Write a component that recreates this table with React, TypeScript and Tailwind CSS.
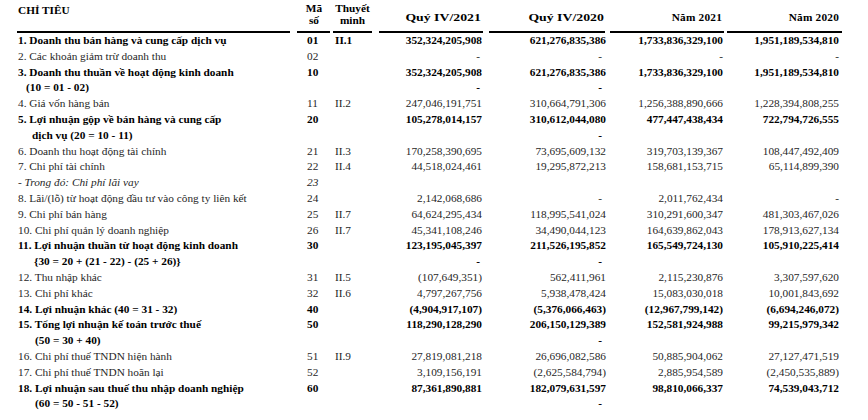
type Row = {
  label: string;
  code?: string;
  note?: string;
  values: string[];
  bold?: boolean;
  italic?: boolean;
  indent?: string;
};

const rows: Row[] = [
  { label: "1. Doanh thu bán hàng và cung cấp dịch vụ", code: "01", note: "II.1", bold: true, values: ["352,324,205,908", "621,276,835,386", "1,733,836,329,100", "1,951,189,534,810"] },
  { label: "2. Các khoản giảm trừ doanh thu", code: "02", values: ["-", "-", "-", "-"] },
  { label: "3. Doanh thu thuần về hoạt động kinh doanh", code: "10", bold: true, values: ["352,324,205,908", "621,276,835,386", "1,733,836,329,100", "1,951,189,534,810"] },
  { label: "(10 = 01 - 02)", bold: true, indent: "pl-[9px]", values: ["-", "-", "", ""] },
  { label: "4. Giá vốn hàng bán", code: "11", note: "II.2", values: ["247,046,191,751", "310,664,791,306", "1,256,388,890,666", "1,228,394,808,255"] },
  { label: "5. Lợi nhuận gộp về bán hàng và cung cấp", code: "20", bold: true, values: ["105,278,014,157", "310,612,044,080", "477,447,438,434", "722,794,726,555"] },
  { label: "dịch vụ (20 = 10 - 11)", bold: true, indent: "pl-[15px]", values: ["", "-", "", ""] },
  { label: "6. Doanh thu hoạt động tài chính", code: "21", note: "II.3", values: ["170,258,390,695", "73,695,609,132", "319,703,139,367", "108,447,492,409"] },
  { label: "7. Chi phí tài chính", code: "22", note: "II.4", values: ["44,518,024,461", "19,295,872,213", "158,681,153,715", "65,114,899,390"] },
  { label: "- Trong đó: Chi phí lãi vay", code: "23", italic: true, values: ["", "", "", ""] },
  { label: "8. Lãi/(lỗ) từ hoạt động đầu tư vào công ty liên kết", code: "24", values: ["2,142,068,686", "-", "2,011,762,434", "-"] },
  { label: "9. Chi phí bán hàng", code: "25", note: "II.7", values: ["64,624,295,434", "118,995,541,024", "310,291,600,347", "481,303,467,026"] },
  { label: "10. Chi phí quản lý doanh nghiệp", code: "26", note: "II.7", values: ["45,341,108,246", "34,490,044,123", "164,639,862,043", "178,913,627,134"] },
  { label: "11. Lợi nhuận thuần từ hoạt động kinh doanh", code: "30", bold: true, values: ["123,195,045,397", "211,526,195,852", "165,549,724,130", "105,910,225,414"] },
  { label: "{30 = 20 + (21 - 22) - (25 + 26)}", bold: true, indent: "pl-[17px]", values: ["-", "-", "", ""] },
  { label: "12. Thu nhập khác", code: "31", note: "II.5", values: ["(107,649,351)", "562,411,961", "2,115,230,876", "3,307,597,620"] },
  { label: "13. Chi phí khác", code: "32", note: "II.6", values: ["4,797,267,756", "5,938,478,424", "15,083,030,018", "10,001,843,692"] },
  { label: "14. Lợi nhuận khác (40 = 31 - 32)", code: "40", bold: true, values: ["(4,904,917,107)", "(5,376,066,463)", "(12,967,799,142)", "(6,694,246,072)"] },
  { label: "15. Tổng lợi nhuận kế toán trước thuế", code: "50", bold: true, values: ["118,290,128,290", "206,150,129,389", "152,581,924,988", "99,215,979,342"] },
  { label: "(50 = 30 + 40)", bold: true, indent: "pl-[18px]", values: ["", "-", "", ""] },
  { label: "16. Chi phí thuế TNDN hiện hành", code: "51", note: "II.9", values: ["27,819,081,218", "26,696,082,586", "50,885,904,062", "27,127,471,519"] },
  { label: "17. Chi phí thuế TNDN hoãn lại", code: "52", values: ["3,109,156,191", "(2,625,584,794)", "2,885,954,589", "(2,450,535,889)"] },
  { label: "18. Lợi nhuận sau thuế thu nhập doanh nghiệp", code: "60", bold: true, values: ["87,361,890,881", "182,079,631,597", "98,810,066,337", "74,539,043,712"] },
  { label: "(60 = 50 - 51 - 52)", bold: true, indent: "pl-[18px]", values: ["", "-", "", ""] },
];

// per column: right padding for numbers, right padding for dashes
const numCols = [
  { pr: "pr-[1px]", dash: "pr-[3px]" },
  { pr: "pr-0", dash: "pr-[4px]" },
  { pr: "pr-[1px]", dash: "pr-[1px]" },
  { pr: "pr-[3px]", dash: "pr-[3px]" },
];

const grid = "grid grid-cols-[280px_36px_43px_107px_123px_118px_118px]";

export default function App() {
  return (
    <div className="w-[868px] h-[420px] bg-white overflow-hidden pl-[17px] text-[11.3px] text-[#262626] [font-family:'Liberation_Serif',serif]">
      {/* Header */}
      <div className={`${grid} h-[33px] font-bold text-black leading-[12px]`}>
        <div className="flex flex-col justify-between">
          <div className="pt-[4px] pl-px">CHỈ TIÊU</div>
          <div className="h-[2px] bg-black mr-[7px]" />
        </div>
        <div className="flex flex-col justify-between text-center">
          <div className="pt-[2px] pr-[2px]">
            Mã
            <br />
            số
          </div>
          <div className="h-[2px] bg-black mr-[3px]" />
        </div>
        <div className="flex flex-col justify-between text-center">
          <div className="pt-[2px] pr-[4px]">
            Thuyết
            <br />
            minh
          </div>
          <div className="h-[2px] bg-black mr-[4px]" />
        </div>
        <div className="flex flex-col justify-between text-right">
          <div className="pt-[11px] pr-[2px]">
            <span className="inline-block origin-right scale-x-[1.22]">Quý IV/2021</span>
          </div>
          <div className="h-[2px] bg-black ml-[3px]" />
        </div>
        <div className="flex flex-col justify-between text-right">
          <div className="pt-[11px] pr-[2px]">
            <span className="inline-block origin-right scale-x-[1.22]">Quý IV/2020</span>
          </div>
          <div className="h-[2px] bg-black ml-[6px] mr-[1px]" />
        </div>
        <div className="flex flex-col justify-between text-right">
          <div className="pt-[11px] pr-[2px] tracking-[0.2px]">Năm 2021</div>
          <div className="h-[2px] bg-black ml-[4px]" />
        </div>
        <div className="flex flex-col justify-between text-right">
          <div className="pt-[11px] pr-[3px] tracking-[0.2px]">Năm 2020</div>
          <div className="h-[2px] bg-black ml-[3px]" />
        </div>
      </div>

      {/* Body */}
      {rows.map((row, i) => (
        <div
          key={i}
          className={`${grid} h-[15.8px] leading-[15.8px] whitespace-nowrap ${row.bold ? "font-bold text-black" : ""} ${row.italic ? "italic" : ""}`}
        >
          <div className={row.indent ?? "pl-px"}>{row.label}</div>
          <div className="pl-[10px]">{row.code}</div>
          <div className="pl-[2px]">{row.note}</div>
          {row.values.map((v, j) => (
            <div key={j} className={`text-right ${v === "-" ? numCols[j].dash : numCols[j].pr}`}>
              {v}
            </div>
          ))}
        </div>
      ))}
    </div>
  );
}
